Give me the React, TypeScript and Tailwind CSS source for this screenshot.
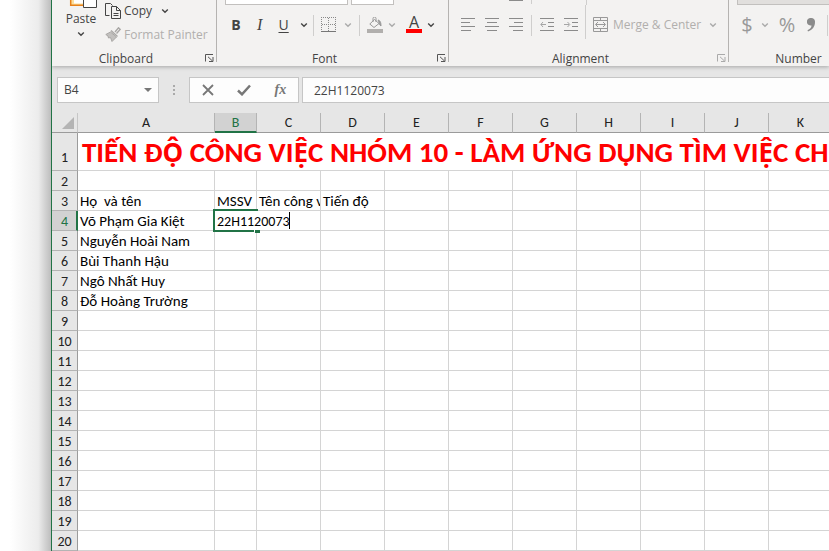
import React from "react";

const COLUMNS = ["A", "B", "C", "D", "E", "F", "G", "H", "I", "J", "K", "L"];

const NAMES: Record<number, string> = {
  3: "Họ  và tên",
  4: "Võ Phạm Gia Kiệt",
  5: "Nguyễn Hoài Nam",
  6: "Bùi Thanh Hậu",
  7: "Ngô Nhất Huy",
  8: "Đỗ Hoàng Trường",
};

const ROWS = Array.from({ length: 19 }, (_, i) => i + 2);

function Chevron({ className = "text-[#444]" }: { className?: string }) {
  return (
    <svg className={`h-2 w-2 shrink-0 ${className}`} viewBox="0 0 8 8" fill="none" stroke="currentColor" strokeWidth="1.4">
      <path d="M1.2 2.5 4 5.2 6.8 2.5" />
    </svg>
  );
}

function Launcher({ className = "text-[#555]" }: { className?: string }) {
  return (
    <button aria-label="More options" className={`absolute right-0.5 bottom-0 ${className}`}>
      <svg className="block h-2 w-[9px]" viewBox="0 0 9 8" fill="none" stroke="currentColor">
        <path d="M.5 7.5V.5H8M3 2.8 7.5 7M8 3v4.5H4" />
      </svg>
    </button>
  );
}

function Divider({ className = "h-[21px]" }: { className?: string }) {
  return <span className={`w-px shrink-0 bg-[#cfcecd] ${className}`} />;
}

function Accented({ children }: { children: React.ReactNode }) {
  return <span className="font-['Open_Sans'] text-[26px] leading-none">{children}</span>;
}

function Lines({ rows, arrow, label }: { rows: string; arrow?: string; label: string }) {
  return (
    <button aria-label={label} className="w-[14px] text-[#8b8b8b]">
      <svg className="block h-[14px] w-[14px]" viewBox="0 0 14 14" fill="none" stroke="currentColor">
        <path d={rows} />
        {arrow && <path d={arrow} stroke="#a5a5a5" />}
      </svg>
    </button>
  );
}

function Group({ title, className, children, launcher }: { title: string; className: string; children: React.ReactNode; launcher?: React.ReactNode }) {
  return (
    <section aria-label={title} className={`relative flex h-[62px] shrink-0 flex-col justify-between border-r border-[#b5b3b1] px-2 ${className}`}>
      {children}
      <h2 className="h-2 pr-4 text-center text-xs leading-[10px] text-[#444]">{title}</h2>
      {launcher}
    </section>
  );
}

function Ribbon() {
  return (
    <div className="relative z-10 flex h-[66px] overflow-hidden bg-[#f3f2f1] shadow-[0_1px_4px_rgba(0,0,0,0.28)]">
      <Group title="Clipboard" className="w-[165px]" launcher={<Launcher />}>
        <div className="flex h-[46px]">
          <button className="flex w-[42px] flex-col items-center text-xs text-[#444]">
            <svg className="h-2 w-8" viewBox="0 0 32 8" fill="none">
              <path d="M5.700-1v6.200h13V-1" fill="#fbdf9d" stroke="#e8811a" strokeWidth="1.500" />
              <path d="M9 0h10v3.500H9Z" fill="#fff" />
              <path d="M18.500-1v8.500h13V-1" fill="#fff" stroke="#444" />
            </svg>
            <span className="h-[22px] leading-[22px]">Paste</span>
            <span className="flex h-2 items-center"><Chevron /></span>
          </button>
          <div className="flex flex-col gap-1 pt-px pl-[3px] text-xs">
            <button className="flex h-5 items-center gap-[3px] text-[#444]">
              <svg className="h-4 w-4" viewBox="0 0 16 16" fill="none" stroke="#444">
                <path d="M4.500 12.500H.5V.5h5l2 2M6.500 3.500h5l4 4v8h-9ZM11.500 3.500v4h4M8.500 10.500h5M8.500 12.500h5" />
              </svg>
              <span>Copy</span>
              <span className="pl-1.5"><Chevron /></span>
            </button>
            <button className="flex h-5 items-center gap-[3px] whitespace-nowrap text-[#b1afad]" disabled>
              <svg className="h-4 w-4 shrink-0" viewBox="0 0 16 16" fill="none" stroke="#a9a7a5">
                <path d="m10 5 3.500-4.200 1.700 1.600L11.500 6.500M6 3.500l6.500 6" strokeWidth="1.400" />
                <path d="M5.500 5 .8 7.500 3 9l.5 2 2-.5L7 14.500 11.500 10Z" fill="#c2c0be" />
              </svg>
              <span>Format Painter</span>
            </button>
          </div>
        </div>
      </Group>

      <Group title="Font" className="w-[232px]" launcher={<Launcher />}>
        <div>
          <div className="flex h-[5px] gap-[3px]">
            <div className="w-[123px] border border-t-0 border-[#c2c0be] bg-white" />
            <div className="w-[43px] border border-t-0 border-[#c2c0be] bg-white" />
          </div>
          <div className="flex h-10 items-center text-sm text-[#444]">
            <button className="w-[22px] font-bold">B</button>
            <button className="w-[26px] font-['Liberation_Serif'] text-base italic">I</button>
            <button className="w-[22px] underline underline-offset-2">U</button>
            <span className="flex w-[19px] justify-center"><Chevron /></span>
            <Divider />
            <button aria-label="Borders" className="pl-[7px]">
              <svg className="block h-4 w-4" viewBox="0 0 16 16" fill="none" stroke="#8a8a8a">
                <path d="M0 .5h16M.5 0v14M14.500 0v14M7.500 1v14M1 7.500h14" strokeDasharray="1 1" />
                <path d="M0 14.500h15" stroke="#777" />
              </svg>
            </button>
            <span className="flex w-[22px] justify-center"><Chevron className="text-[#aaa]" /></span>
            <Divider />
            <button aria-label="Fill color" className="pl-[7px]">
              <svg className="block h-4 w-4" viewBox="0 0 16 16" fill="none" stroke="#999">
                <path d="m7.500 2.500 4.500 4L7 10.500 2.800 7ZM6 5V1.500a1.500 1.500 0 0 1 3 0V5" />
                <path d="M11 3c2 .5 3 2 3 6-1.500-1-2-2.500-2-4Z" fill="#999" />
                <path d="M0 14h16" stroke="#b1afad" strokeWidth="4" />
              </svg>
            </button>
            <span className="flex w-[18px] justify-center"><Chevron className="text-[#aaa]" /></span>
            <button className="ml-[5px] flex h-4 w-4 flex-col items-center justify-between">
              <span className="h-3 text-base leading-[10px]">A</span>
              <span className="h-1 w-4 bg-[#f00]" />
            </button>
            <span className="flex w-[18px] justify-center"><Chevron /></span>
          </div>
        </div>
      </Group>

      <Group title="Alignment" className="w-[280px]" launcher={<Launcher className="text-[#aaa]" />}>
        <div className="pl-1">
          <div className="flex h-[5px]">
            <span className="ml-12 h-px w-[14px] bg-[#8b8b8b]" />
            <Divider className="ml-2 h-1" />
            <Divider className="ml-[54px] h-[5px]" />
          </div>
          <div className="flex h-10 items-center text-xs text-[#b1afad]">
            <div className="flex gap-[10px]">
              <Lines label="Align left" rows="M0 .5h14M0 4.500h9M0 8.500h14M0 12.500h10" />
              <Lines label="Center" rows="M0 .5h14M2 4.500h10M0 8.500h14M2 12.500h10" />
              <Lines label="Align right" rows="M0 .5h14M5 4.500h9M0 8.500h14M4 12.500h10" />
            </div>
            <Divider className="mx-2 h-[21px]" />
            <div className="flex gap-[10px]">
              <Lines label="Decrease indent" rows="M0 .5h14M8 4.500h6M8 8.500h6M0 12.500h14" arrow="M6 6.500H1M3 4 .8 6.500 3 9" />
              <Lines label="Increase indent" rows="M0 .5h14M8 4.500h6M8 8.500h6M0 12.500h14" arrow="M0 6.500h5M3.500 4 5.800 6.500 3.500 9" />
            </div>
            <Divider className="ml-[7px] h-[34px] self-start" />
            <button className="flex items-center gap-1 pl-[7px] whitespace-nowrap" disabled>
              <svg className="h-4 w-4" viewBox="0 0 16 16" fill="none" stroke="#999">
                <path d="M.5.5h14v14H.5ZM0 3.500h15M0 11.500h15M7.500 0v3M7.500 12v3M3 7.500h9M5 5 2.500 7.500 5 10M10 5l2.500 2.500L10 10" />
              </svg>
              <span>Merge &amp; Center</span>
            </button>
            <span className="pl-2"><Chevron className="text-[#aaa]" /></span>
          </div>
        </div>
      </Group>

      <Group title="Number" className="w-[156px]">
        <div>
          <div className="h-[5px] border border-t-0 border-[#c2c0be] bg-[#e1dfdd]" />
          <div className="flex h-10 items-center text-xl text-[#999]">
            <button className="w-[20px]">$</button>
            <span className="flex w-4 justify-center"><Chevron className="text-[#aaa]" /></span>
            <button className="w-[28px]">%</button>
            <button aria-label="Comma style" className="w-5">
              <svg className="mx-auto block h-3.5 w-2" viewBox="0 0 8 14" fill="#8b8b8b">
                <path d="M4 0a3.800 3.800 0 0 1 4 4c0 4.500-2.500 8-7 9.500l-.5-1.300C3 11 4.500 9.500 4.500 7.500A3.800 3.800 0 1 1 4 0Z" />
              </svg>
            </button>
            <Divider className="ml-[6px] h-[21px]" />
          </div>
        </div>
      </Group>
    </div>
  );
}

function FormulaBar() {
  return (
    <div className="flex h-[47px] items-start pt-[11px] pl-[5px]">
      <div className="flex h-[26px] w-[102px] shrink-0 items-center justify-between border border-[#c6c6c6] bg-[#fdfdfd] px-1.5 text-xs text-[#444]">
        <input aria-label="Name box" defaultValue="B4" className="w-16 outline-none" />
        <svg className="h-1 w-2" viewBox="0 0 8 4" fill="#777"><path d="M0 0h8L4 4Z" /></svg>
      </div>
      <div className="flex h-[26px] w-[30px] shrink-0 flex-col items-center justify-center gap-0.5">
        <span className="size-0.5 bg-[#aaa]" />
        <span className="size-0.5 bg-[#aaa]" />
        <span className="size-0.5 bg-[#aaa]" />
      </div>
      <div className="mr-[3px] flex h-[26px] w-[110px] shrink-0 items-center justify-around border border-[#c6c6c6] bg-[#fdfdfd] text-[#777]">
        <button aria-label="Cancel">
          <svg className="block size-3" viewBox="0 0 12 12" fill="none" stroke="currentColor" strokeWidth="1.800"><path d="m1 1 10 10M11 1 1 11" /></svg>
        </button>
        <button aria-label="Enter">
          <svg className="block h-3 w-3.5" viewBox="0 0 14 12" fill="none" stroke="currentColor" strokeWidth="2.500"><path d="m1 6.500 4 3.800L13 1.500" /></svg>
        </button>
        <button className="font-['Liberation_Serif'] text-sm font-bold italic">fx</button>
      </div>
      <input aria-label="Formula" defaultValue="22H1120073" className="h-[26px] min-w-0 flex-1 border border-r-0 border-[#c6c6c6] bg-[#fdfdfd] pl-[11px] text-xs text-[#444] outline-none" />
    </div>
  );
}

function Sheet() {
  return (
    <table className="w-[845px] table-fixed border-separate border-spacing-0 font-['Carlito','Lato','Noto_Sans',sans-serif] text-sm leading-[17px] text-black">
      <colgroup>
        <col className="w-[26px]" />
        <col className="w-[137px]" />
        <col className="w-[42px]" />
        {COLUMNS.slice(2).map((c) => (
          <col key={c} className="w-16" />
        ))}
      </colgroup>
      <thead>
        <tr className="h-5 bg-[#e6e6e6]">
          <th aria-label="Select all" className="border-r border-b border-r-[#c6c6c6] border-b-[#9b9b9b] p-0">
            <svg className="mr-[3px] ml-auto block size-3" viewBox="0 0 12 12" fill="#b4b4b4"><path d="M12 0v12H0Z" /></svg>
          </th>
          {COLUMNS.map((c) => (
            <th
              key={c}
              scope="col"
              className={
                c === "B"
                  ? "border-r border-b-2 border-r-[#b4b4b4] border-b-[#217346] bg-[#d2d2d2] p-0 font-normal text-[#217346]"
                  : "border-r border-b border-r-[#b4b4b4] border-b-[#9b9b9b] p-0 font-normal text-[#222]"
              }
            >
              {c}
            </th>
          ))}
        </tr>
      </thead>
      <tbody>
        <tr className="h-[38px]">
          <th scope="row" className="border-r border-b border-r-[#9b9b9b] border-b-[#b4b4b4] bg-[#e6e6e6] p-0 pb-1 align-bottom font-normal text-[#222]">1</th>
          <td colSpan={12} className="border-b border-[#d4d4d4] p-0 pt-0.5 pl-1 text-[29px] leading-[35px] font-bold whitespace-nowrap text-[#f00]">
            TIẾN Đ<Accented>Ộ</Accented> CÔNG VI<Accented>Ệ</Accented>C NHÓM 10 - LÀM ỨNG DỤNG TÌM VI<Accented>Ệ</Accented>C CH
          </td>
        </tr>
        {ROWS.map((r) => (
          <tr key={r} className="h-5">
            <th
              scope="row"
              className={
                r === 4
                  ? "border-r-2 border-b border-r-[#217346] border-b-[#b4b4b4] bg-[#d2d2d2] p-0 pt-0.5 pl-px font-normal text-[#217346]"
                  : "border-r border-b border-r-[#9b9b9b] border-b-[#b4b4b4] bg-[#e6e6e6] p-0 pt-0.5 font-normal text-[#222]"
              }
            >
              {r}
            </th>
            {COLUMNS.map((c) => {
              if (r === 4 && c === "B") {
                return (
                  <td key={c} className="relative border-r border-b border-[#d4d4d4] p-0">
                    <div className="absolute -top-0.5 -left-0.5 flex h-[23px] w-[45px] border-2 border-r-0 border-[#217346]">
                      <div className="flex h-[19px] shrink-0 items-center bg-white pl-0.5">
                        <input aria-label="B4" defaultValue="22H1120073" className="w-[72px] pt-px outline-none" />
                        <span className="h-[17px] w-px bg-black" />
                      </div>
                      <span className="absolute -right-0.5 -bottom-[3px] h-1 w-[6px] border-t border-l border-white bg-[#217346]" />
                    </div>
                  </td>
                );
              }
              const text = c === "A" ? NAMES[r] : r === 3 ? { B: "MSSV", C: "Tên công việc", D: "Tiến độ" }[c] : undefined;
              return (
                <td key={c} className="overflow-hidden border-r border-b border-[#d4d4d4] p-0 pt-0.5 pl-0.5 text-[15px] leading-[17px] whitespace-pre">
                  {text}
                </td>
              );
            })}
          </tr>
        ))}
      </tbody>
    </table>
  );
}

export default function App() {
  return (
    <div className="flex h-screen overflow-hidden bg-white font-['Open_Sans','Noto_Sans',sans-serif]">
      <div className="w-[51px] shrink-0 bg-linear-to-r from-white from-20% via-[#ececec] via-75% to-[#bdbdbd]" />
      <main className="min-w-0 flex-1 overflow-hidden border-l border-[#217346] bg-white">
        <div className="bg-[#e6e6e6]">
          <Ribbon />
          <FormulaBar />
        </div>
        <Sheet />
      </main>
    </div>
  );
}
